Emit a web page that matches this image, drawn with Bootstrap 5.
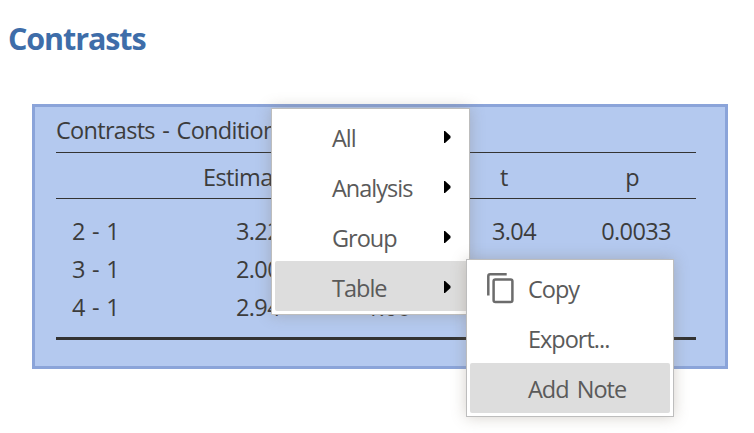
<!DOCTYPE html>
<html lang="en">
<head>
<meta charset="utf-8">
<title>Contrasts</title>
<link href="https://cdn.jsdelivr.net/npm/bootstrap@5.3.0/dist/css/bootstrap.min.css" rel="stylesheet">
<style>
body{font-family:"Open Sans","Noto Sans",sans-serif;font-size:23.5px;letter-spacing:-.6px;color:#3c3c3c;background:#fff;overflow:hidden}
.page-area{width:754px;height:433px;padding:18px 26px 0 8px}
.heading{font-size:30.5px;line-height:40px;font-weight:700;color:#3e6da9;letter-spacing:-1.1px}
.result{margin:46px 0 0 24px;width:696px;height:265px;border:3px solid #8ba4d9;background:#b4c9ef;padding:0 29px 0 21px}
.stats{width:640px;table-layout:fixed;border-collapse:separate;border-spacing:0;line-height:38px;white-space:nowrap;color:inherit}
.stats th,.stats td{padding:0;font-weight:400;text-align:center}
.stats .title-row th{height:46px;text-align:left;border-bottom:1px solid #333;padding-bottom:0;letter-spacing:-.7px;word-spacing:2px}
.stats .names th{height:46px;border-bottom:1px solid #333;padding-top:2px}
.stats .gap-row td{height:13px;line-height:0}
.stats .vals td{height:38px}
.stats .vals td:first-child{text-align:left;padding-left:16px;letter-spacing:0;word-spacing:.5px}
.stats .vals td:nth-child(2){padding-left:20px}
.stats .vals td:nth-child(3){padding-left:24px}
.stats .vals td:nth-child(4){padding-left:20px}
.stats .vals td:nth-child(5){padding-left:8px}
.stats .last-row td{height:14px;line-height:0;border-bottom:3px solid #333}
.ctx{position:absolute;background:#fff;border:1px solid #bdbdbd;box-shadow:0 0 14px rgba(120,110,90,.32);color:#5a5a5a;letter-spacing:-1px;word-spacing:3px}
.ctx-main{left:271px;top:108px;width:199px;height:207px;padding:2px 0 3px 3px}
.ctx-sub{left:466px;top:259px;width:208px;height:158px;padding:3px}
.entry{height:50px;line-height:48px;padding-top:2px;border-radius:2px}
.entry.active-entry{background:#ddd}
.ctx-main .entry{padding-left:57px;padding-right:18px;padding-top:3px}
.ctx-sub .entry{padding-left:16px}
.icon-slot{width:42px;height:50px;flex:none}
.arrow{width:7px;height:12px;margin-bottom:2px}
</style>
<script src="https://cdn.jsdelivr.net/npm/bootstrap@5.3.0/dist/js/bootstrap.bundle.min.js"></script>
</head>
<body>
<main class="page-area">
  <h1 class="heading m-0">Contrasts</h1>
  <section class="result">
    <table class="stats">
      <colgroup><col style="width:128px"><col style="width:128px"><col style="width:128px"><col style="width:128px"><col style="width:128px"></colgroup>
      <thead>
        <tr class="title-row"><th colspan="5">Contrasts - Condition</th></tr>
        <tr class="names"><th></th><th>Estimate</th><th>SE</th><th>t</th><th>p</th></tr>
      </thead>
      <tbody>
        <tr class="gap-row"><td colspan="5"></td></tr>
        <tr class="vals"><td>2 - 1</td><td>3.22</td><td>1.06</td><td>3.04</td><td>0.0033</td></tr>
        <tr class="vals"><td>3 - 1</td><td>2.00</td><td>1.06</td><td></td><td></td></tr>
        <tr class="vals"><td>4 - 1</td><td>2.94</td><td>1.06</td><td></td><td></td></tr>
        <tr class="last-row"><td colspan="5"></td></tr>
      </tbody>
    </table>
  </section>
</main>

<nav class="ctx ctx-main">
  <div class="entry d-flex align-items-center justify-content-between"><span>All</span><svg class="arrow" viewBox="0 0 7 12"><path d="M0 0h1l5.500 5v2L1 12H0z"/></svg></div>
  <div class="entry d-flex align-items-center justify-content-between"><span>Analysis</span><svg class="arrow" viewBox="0 0 7 12"><path d="M0 0h1l5.500 5v2L1 12H0z"/></svg></div>
  <div class="entry d-flex align-items-center justify-content-between"><span>Group</span><svg class="arrow" viewBox="0 0 7 12"><path d="M0 0h1l5.500 5v2L1 12H0z"/></svg></div>
  <div class="entry active-entry d-flex align-items-center justify-content-between"><span>Table</span><svg class="arrow" viewBox="0 0 7 12"><path d="M0 0h1l5.500 5v2L1 12H0z"/></svg></div>
</nav>

<nav class="ctx ctx-sub">
  <div class="entry d-flex align-items-center">
    <svg class="icon-slot" viewBox="0 0 42 50" fill="none" stroke="#6c6c6c" stroke-width="2.500"><path d="M20.700 10.300H4.200Q2.300 10.300 2.300 12.200V31.500"/><rect x="7.600" y="15.500" width="18.800" height="22.500" rx="1.800"/></svg>
    <span>Copy</span>
  </div>
  <div class="entry d-flex align-items-center"><span class="icon-slot"></span><span>Export...</span></div>
  <div class="entry active-entry d-flex align-items-center"><span class="icon-slot"></span><span>Add Note</span></div>
</nav>
</body>
</html>
